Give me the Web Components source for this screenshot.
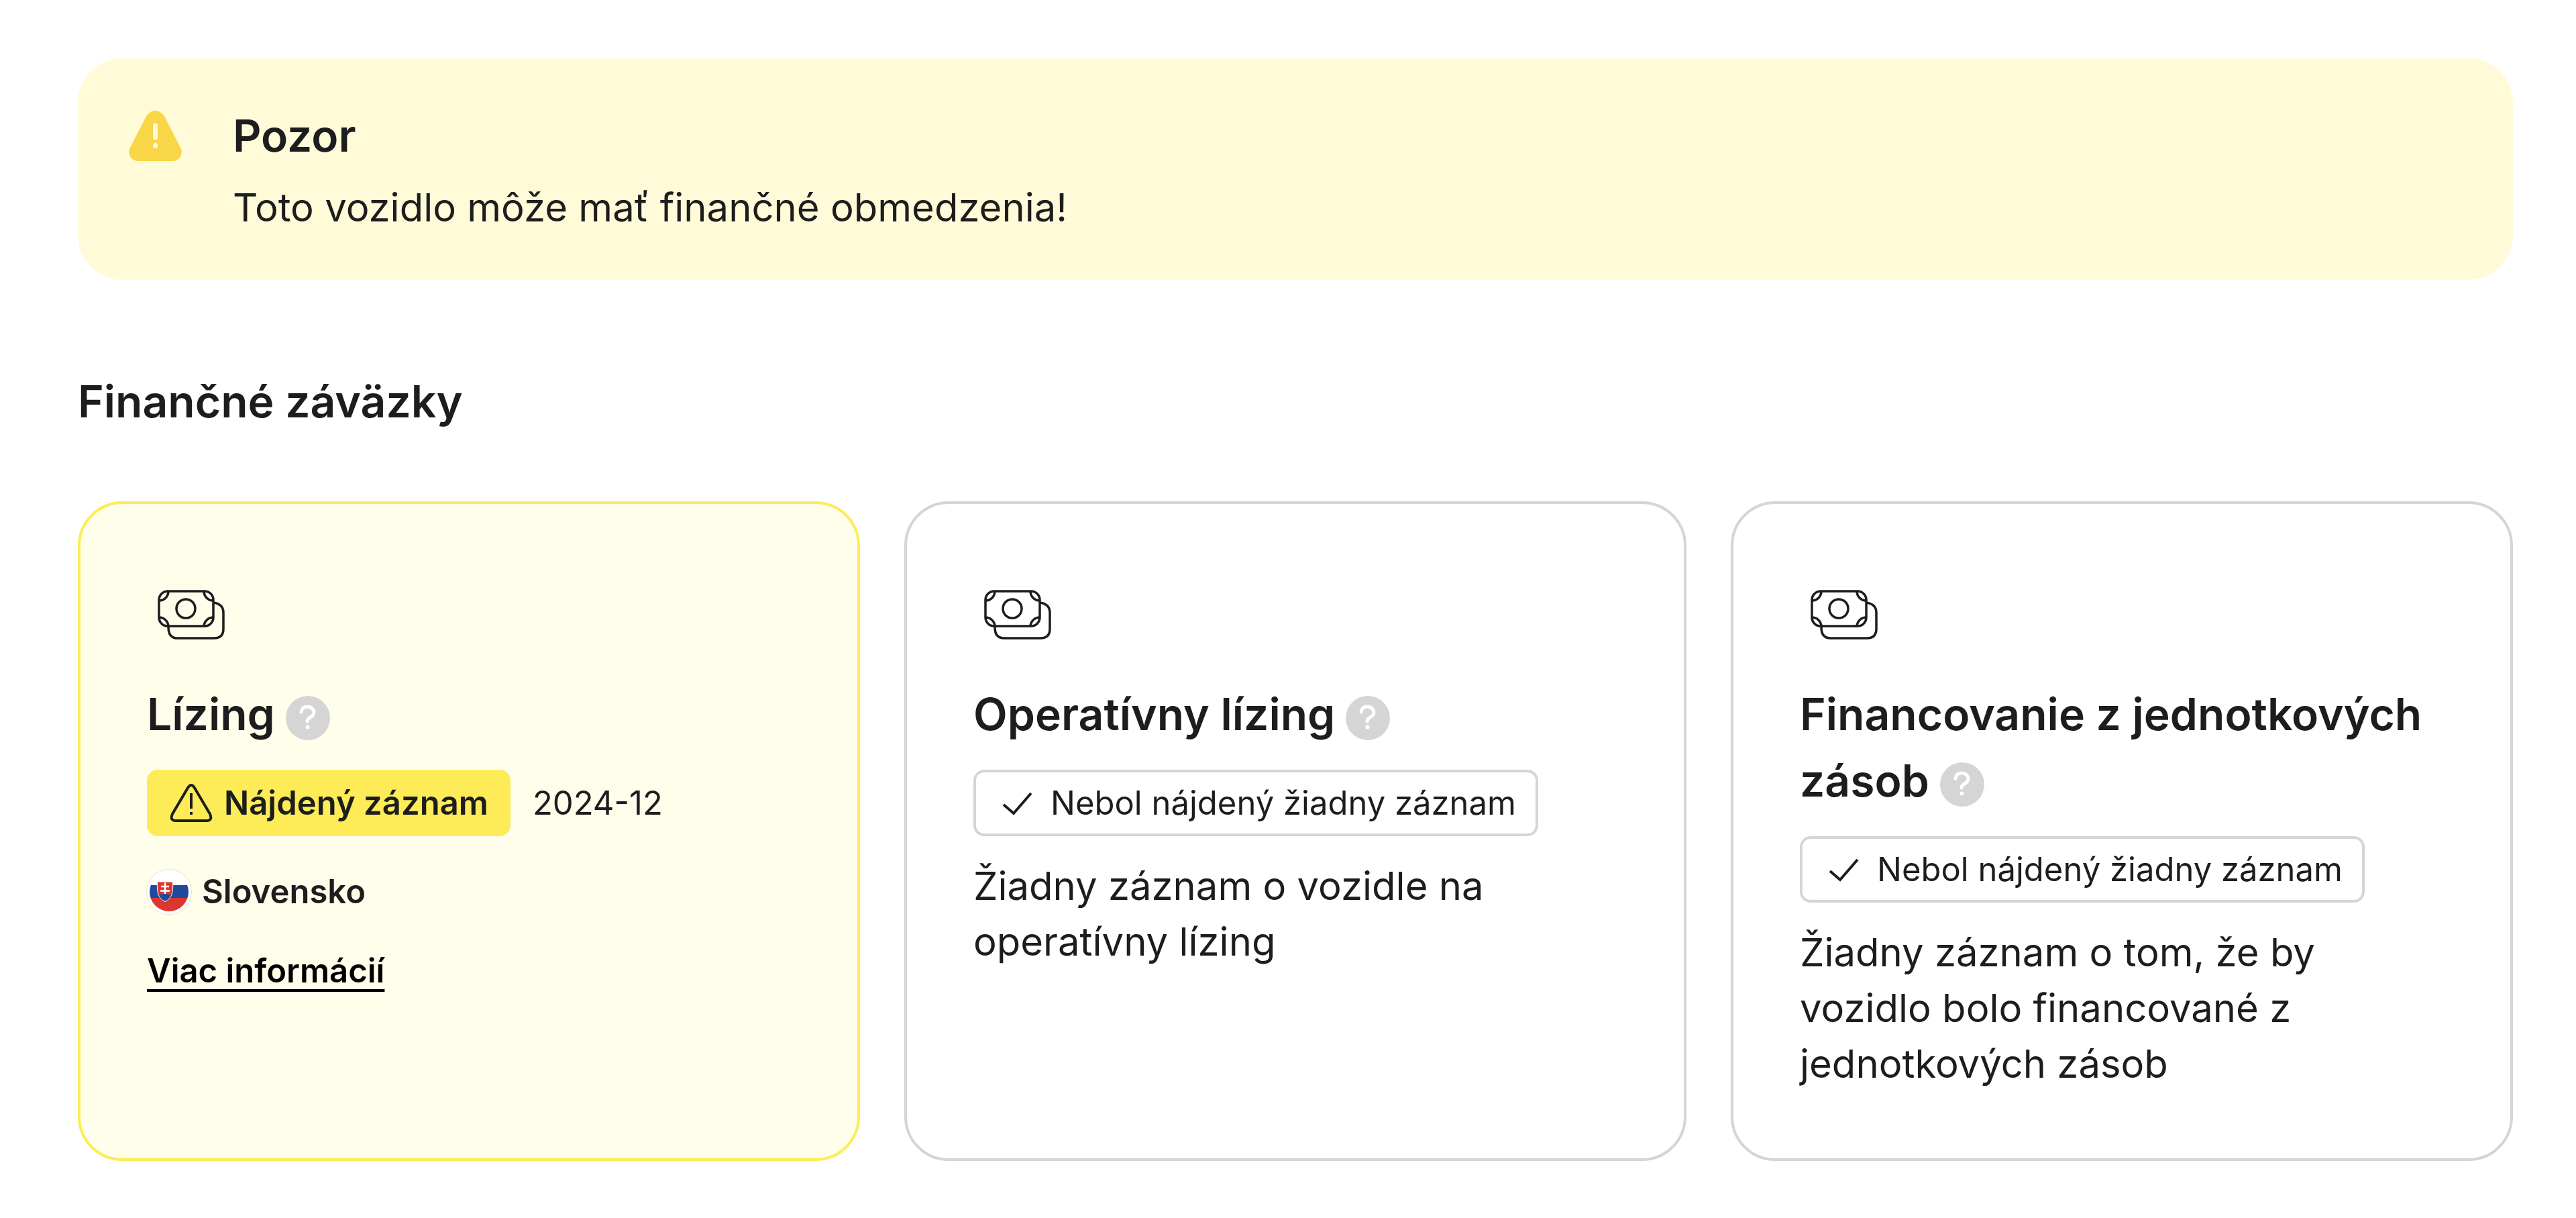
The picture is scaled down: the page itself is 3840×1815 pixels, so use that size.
<!DOCTYPE html>
<html lang="sk">
<head>
<meta charset="utf-8">
<meta name="viewport" content="width=device-width, initial-scale=1">
<title>Finančné záväzky</title>
<style>
  body {
    margin: 0;
    background: #fff;
    color: #1d1d1d;
    font-family: Inter, "Liberation Sans", sans-serif;
    font-optical-sizing: none;
  }
</style>
</head>
<body>
<finance-report></finance-report>

<script>
class AlertBanner extends HTMLElement {
    constructor() {
        super();
        this.attachShadow({ mode: 'open' });
    }

    connectedCallback() {
        this.shadowRoot.innerHTML = `
      <style>
        :host {
          display: flex;
          gap: 66px;
          padding: 66px;
          border-radius: 66px;
          background: #fffbd9;
        }
        svg { display: block; flex: none; width: 99px; height: 99px; }
        .text { display: flex; flex-direction: column; gap: 16px; }
        h2 { margin: 0; font-size: 66px; line-height: 99px; font-weight: 600; }
        p { margin: 0; font-size: 58px; line-height: 83px; }
      </style>
      <svg viewBox="0 0 99 99" aria-hidden="true">
        <path fill="#f8d648" d="M35 22C39 15 44 12 49.500 12S60 15 64 22L87 67C92 77 85 87 75 87H24C14 87 7 77 12 67Z"/>
        <path stroke="#fffbd9" stroke-width="7" stroke-linecap="round" d="M49.500 34V52M49.500 63.500V64.500"/>
      </svg>
      <div class="text">
        <h2><slot name="title"></slot></h2>
        <p><slot></slot></p>
      </div>
    `;
    }
}

class HelpButton extends HTMLElement {
    constructor() {
        super();
        this.attachShadow({ mode: 'open' });
    }

    connectedCallback() {
        this.shadowRoot.innerHTML = `
      <style>
        :host {
          display: inline-block;
          margin-left: 16px;
          vertical-align: middle;
          line-height: 0;
        }
        button {
          display: block;
          width: 66px;
          height: 66px;
          padding: 0;
          border: 0;
          border-radius: 50%;
          background: #d5d5d5;
          cursor: pointer;
        }
        svg { display: block; }
      </style>
      <button type="button" aria-label="Pomoc">
        <svg width="66" height="66" viewBox="0 0 66 66" fill="none" stroke="#fff" stroke-width="5" stroke-linecap="round" stroke-linejoin="round" aria-hidden="true">
          <path d="M23 24C24 18 28 16 32 16C38 16 42 20 42 25C42 32 32 31 32 38"/>
          <circle cx="32.500" cy="46.500" r="3" fill="#fff" stroke="none"/>
        </svg>
      </button>
    `;
    }
}

class StatusBadge extends HTMLElement {
    constructor() {
        super();
        this.attachShadow({ mode: 'open' });
    }

    connectedCallback() {
        const icons = {
            found: `
          <path d="M28 10Q33 2 38 10L61 49Q65 58 57 59H9Q1 58 5 49Z"/>
          <path d="M33 18V41M33 46V50"/>
        `,
            clear: '<path d="M12 35L27 48L53 18"/>'
        };
        const type = this.getAttribute('type');

        this.shadowRoot.innerHTML = `
      <style>
        :host {
          display: inline-flex;
          align-items: center;
          gap: 16px;
          box-sizing: border-box;
          height: 99px;
          padding: 0 33px;
          border-radius: 16px;
          font-size: 49px;
          line-height: 66px;
          white-space: nowrap;
        }
        :host([type="found"]) { background: #fdec57; font-weight: 600; }
        :host([type="clear"]) { background: #fff; box-shadow: inset 0 0 0 4px #d5d5d5; }
        svg { flex: none; }
      </style>
      <svg width="66" height="66" viewBox="0 0 66 66" fill="none" stroke="#1d1d1d" stroke-width="4" aria-hidden="true">${icons[type]}</svg>
      <slot></slot>
    `;
    }
}

class CountryLabel extends HTMLElement {
    constructor() {
        super();
        this.attachShadow({ mode: 'open' });
    }

    connectedCallback() {
        this.shadowRoot.innerHTML = `
      <style>
        :host {
          display: flex;
          align-items: center;
          gap: 16px;
          height: 99px;
          font-size: 49px;
          font-weight: 600;
        }
        svg { flex: none; border-radius: 50%; box-shadow: 0 0 0 1px #e6e6dc; }
      </style>
      <svg width="66" height="66" viewBox="0 0 66 66" aria-hidden="true">
        <defs><clipPath id="round"><circle cx="33" cy="33" r="29"/></clipPath></defs>
        <circle cx="33" cy="33" r="33" fill="#fff"/>
        <g clip-path="url(#round)">
          <rect y="23" width="66" height="20" fill="#214a9c"/>
          <rect y="42" width="66" height="24" fill="#dc372f"/>
        </g>
        <path fill="#dc372f" d="M15.500 18.500H38.500C39.500 34 37 43 27 47.500C17 43 14.500 34 15.500 18.500Z"/>
        <path fill="#214a9c" d="M16.500 38Q20 35 22 37.500Q27 33 32 37.500Q34 35 37.500 38Q34 44.500 27 47.500Q20 44.500 16.500 38Z"/>
        <path fill="none" stroke="#fff" d="M15.500 18.500C14.500 34 17 43 27 47.500C37 43 39.500 34 38.500 18.500"/>
        <path stroke="#fff" stroke-width="2.500" d="M27 19.500V36M21 25H33M20 31.500H34"/>
      </svg>
      <slot></slot>
    `;
    }
}

class RecordCard extends HTMLElement {
    constructor() {
        super();
        this.attachShadow({ mode: 'open' });
    }

    connectedCallback() {
        this.shadowRoot.innerHTML = `
      <style>
        :host {
          display: flex;
          flex-direction: column;
          gap: 33px;
          box-sizing: border-box;
          min-width: 0;
          padding: 99px;
          border: 4px solid #d5d5d5;
          border-radius: 66px;
          background: #fff;
        }
        :host([highlighted]) { border-color: #fdec57; background: #fffeeb; }
        .icon { display: block; width: 132px; height: 132px; }
        h3 { margin: 0; font-size: 66px; line-height: 99px; font-weight: 600; }
        .status {
          display: flex;
          flex-wrap: wrap;
          align-items: center;
          gap: 33px;
          font-size: 49px;
        }
        ::slotted(p) { margin: 0; font-size: 58px; line-height: 83px; }
        ::slotted(a) {
          align-self: flex-start;
          color: #000;
          font-size: 49px;
          line-height: 72px;
          font-weight: 600;
          text-decoration: underline;
          text-decoration-thickness: 4px;
          text-underline-offset: 10px;
        }
      </style>
      <svg class="icon" viewBox="0 0 132 132" fill="none" stroke="#1d1d1d" stroke-width="3.500" aria-hidden="true">
        <rect x="18" y="31" width="81" height="52" rx="13"/>
        <circle cx="58" cy="57" r="14"/>
        <path d="M32 31A14 14 0 0 1 18 45M85 31A14 14 0 0 0 99 45M18 70A14 14 0 0 1 32 83M99 70A14 14 0 0 0 85 83"/>
        <path d="M99 48Q114 50 114 63V87Q114 101 100 101H46Q32 101 32 85V83"/>
      </svg>
      <h3><slot name="title"></slot><help-button></help-button></h3>
      <div class="status"><slot name="status"></slot></div>
      <slot></slot>
    `;
    }
}

class FinanceReport extends HTMLElement {
    constructor() {
        super();
        this.attachShadow({ mode: 'open' });
    }

    connectedCallback() {
        this.shadowRoot.innerHTML = `
      <style>
        :host { display: block; padding: 87px 94px 86px 116px; }
        h2 {
          margin: 132px 0 99px;
          font-size: 66px;
          line-height: 99px;
          font-weight: 600;
        }
        .cards {
          display: grid;
          grid-template-columns: repeat(3, minmax(0, 1fr));
          gap: 66px;
        }
      </style>
      <alert-banner>
        <span slot="title">Pozor</span>
        Toto vozidlo môže mať finančné obmedzenia!
      </alert-banner>
      <h2>Finančné záväzky</h2>
      <div class="cards">
        <record-card highlighted>
          <span slot="title">Lízing</span>
          <status-badge slot="status" type="found">Nájdený záznam</status-badge>
          <span slot="status">2024-12</span>
          <country-label>Slovensko</country-label>
          <a href="#">Viac informácií</a>
        </record-card>
        <record-card>
          <span slot="title">Operatívny lízing</span>
          <status-badge slot="status" type="clear">Nebol nájdený žiadny záznam</status-badge>
          <p>Žiadny záznam o vozidle na operatívny lízing</p>
        </record-card>
        <record-card>
          <span slot="title">Financovanie z jednotkových zásob</span>
          <status-badge slot="status" type="clear">Nebol nájdený žiadny záznam</status-badge>
          <p>Žiadny záznam o tom, že by vozidlo bolo financované z jednotkových zásob</p>
        </record-card>
      </div>
    `;
    }
}

customElements.define('alert-banner', AlertBanner);
customElements.define('help-button', HelpButton);
customElements.define('status-badge', StatusBadge);
customElements.define('country-label', CountryLabel);
customElements.define('record-card', RecordCard);
customElements.define('finance-report', FinanceReport);
</script>
</body>
</html>
